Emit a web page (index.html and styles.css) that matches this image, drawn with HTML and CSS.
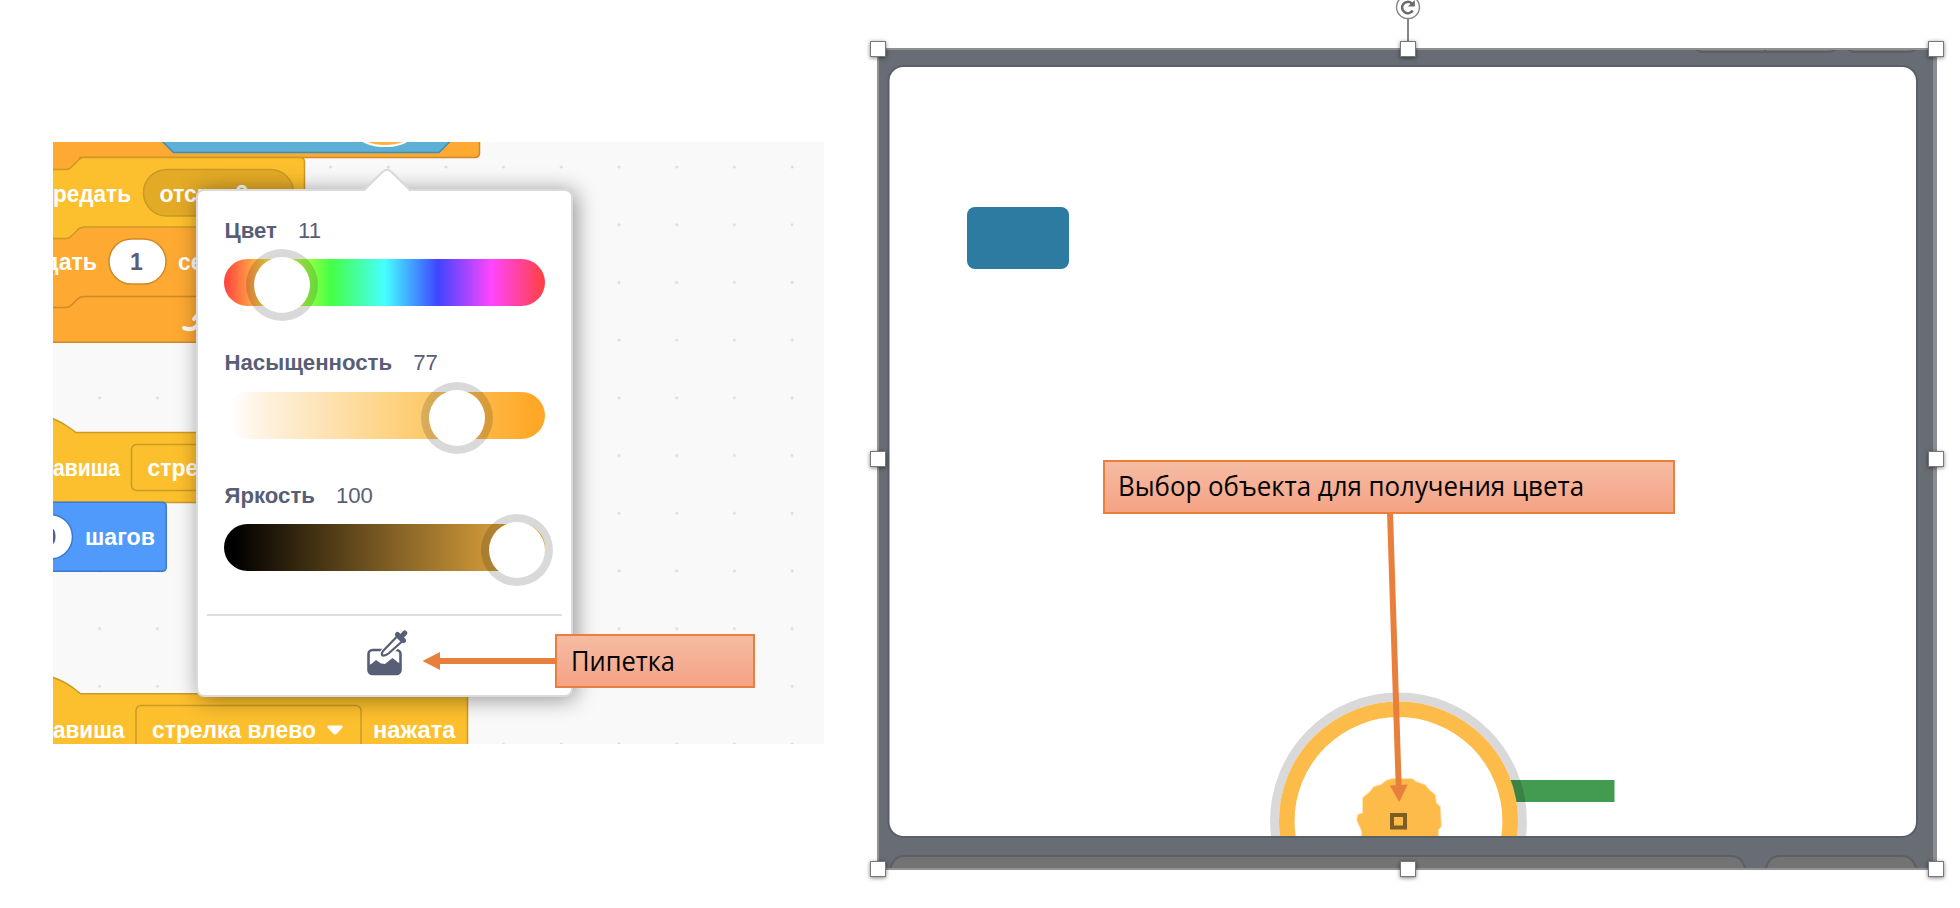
FILE: index.html
```html
<!DOCTYPE html>
<html lang="ru">
<head>
<meta charset="utf-8">
<title>Пипетка</title>
<link rel="stylesheet" href="styles.css">
</head>
<body>
<main class="slide">
  <section class="workspace">
    <svg class="blocks" width="771" height="602" viewBox="53 142 771 602">
      <defs>
        <pattern id="grid" x="70.85" y="138.15" width="57.7" height="57.7" patternUnits="userSpaceOnUse">
          <circle cx="28.85" cy="28.85" r="1.5" fill="#dcdcdc"/>
        </pattern>
      </defs>
      <rect x="53" y="142" width="771" height="602" fill="url(#grid)"/>

      <path class="orange" d="M40 130H479.500V153q0 4.500-4.500 4.500H80V342.300H40z"/>
      <path class="sensing" d="M151 130L173.500 152.500H439L461.500 130z"/>
      <ellipse class="swatch" cx="385" cy="134" rx="27" ry="12"/>

      <path class="orange" d="M40 215H230V342.300H40z"/>
      <path class="orange" d="M40 307.500H66q3 0 5-2l6-6q3-3 7-3H230V342.300H40z"/>
      <path class="yellow" d="M40 169.500H66q3 0 5-2l6-6q3-4 7-4H300q4.500 0 4.500 4.500V227H84q-4 0-7 3.500l-6 6q-2 2-5 2H40z"/>
      <rect class="pill-dark" x="143.500" y="169.500" width="150" height="46.500" rx="23.250"/>
      <text class="label" x="53" y="201.500" textLength="78" lengthAdjust="spacingAndGlyphs">редать</text>
      <text class="label" x="159.500" y="201.500">отскок</text>
      <text class="label" x="235.500" y="201.500">2</text>

      <text class="label" x="44" y="269.500" textLength="53" lengthAdjust="spacingAndGlyphs">дать</text>
      <rect class="input-orange" x="109" y="239" width="57" height="45" rx="22.500"/>
      <text class="value" x="136.500" y="269.500">1</text>
      <text class="label" x="178" y="269.500">сек</text>
      <path class="loop" d="M184 328q11 4 15-6v-8M194 319l6-7 7 7"/>

      <path class="yellow" d="M40 415q17 3 32 14.500l4 3H240V502.500H40z" />
      <text class="label" x="53" y="476" textLength="67" lengthAdjust="spacingAndGlyphs">авиша</text>
      <rect class="field" x="131.500" y="444.500" width="200" height="46" rx="5"/>
      <text class="label" x="147.500" y="476">стрелка</text>

      <path class="motion" d="M40 502.300H162q4.300 0 4.300 4.300V567q0 4.300-4.300 4.300H40z"/>
      <rect class="input-blue" x="12" y="514.500" width="60.500" height="44.500" rx="22.250"/>
      <text class="value" x="50" y="545">0</text>
      <text class="label" x="85" y="545" textLength="70" lengthAdjust="spacingAndGlyphs">шагов</text>

      <path class="yellow" d="M40 674q20 3.500 36 16l4.500 3.800H467.500V760H40z"/>
      <text class="label" x="53" y="737.500" textLength="71.500" lengthAdjust="spacingAndGlyphs">авиша</text>
      <rect class="field" x="136" y="705.500" width="225" height="60" rx="5"/>
      <text class="label" x="152" y="737.500" textLength="164" lengthAdjust="spacingAndGlyphs">стрелка влево</text>
      <path class="white" d="M329.500 725.500h11q3.500 0 1.500 2.500l-5 5.500q-2 2-4 0l-5-5.500q-2-2.500 1.500-2.500z"/>
      <text class="label" x="373" y="737.500" textLength="82.500" lengthAdjust="spacingAndGlyphs">нажата</text>
    </svg>
  </section>

  <section class="picker">
    <svg class="picker-tip" width="52" height="25" viewBox="0 0 52 25">
      <path class="tip-fill" d="M1 25L3 23 21.500 4.500q4.500-4.500 9 0L49 23l2 2z"/>
      <path class="tip-line" d="M2.500 22.500L21.500 4q4.500-4.500 9 0L49.500 22.500"/>
    </svg>
    <div class="control">
      <div class="caption"><b class="name">Цвет</b><span>11</span></div>
      <div class="bar hue"><i class="knob knob-hue"></i></div>
    </div>
    <div class="control">
      <div class="caption"><b class="name">Насыщенность</b><span>77</span></div>
      <div class="bar saturation"><i class="knob knob-saturation"></i></div>
    </div>
    <div class="control">
      <div class="caption"><b class="name">Яркость</b><span>100</span></div>
      <div class="bar brightness"><i class="knob knob-brightness"></i></div>
    </div>
    <div class="tools">
      <svg width="42" height="46" viewBox="0 0 42 46">
        <rect x="1.500" y="20" width="32" height="24" rx="4" fill="#fff" stroke="#575e75" stroke-width="2.600"/>
        <path fill="#575e75" d="M2 35l3-1.500 4-3.500 5 3.500 4 .5 7.500-6 5 4 3 2v7q0 3.500-3.500 3.500H5.500Q2 44.500 2 41z"/>
        <path d="M16 25.500q-1.500-1.500.5-4L30 7l5 4.500L21.500 23.500q-3 2.500-5.500 2z" fill="#fff" stroke="#fff" stroke-width="5.500"/>
        <path d="M15.500 25.500q-1.500-1.500.5-4.500L30 6.500l5 5L21.500 23.500q-3 2.500-6 2z" fill="#fff" stroke="#575e75" stroke-width="2.200" stroke-linejoin="round"/>
        <path d="M30.500 4.500l6 6M34 7l3.800-4" fill="none" stroke="#575e75" stroke-width="5" stroke-linecap="round"/>
      </svg>
    </div>
  </section>

  <section class="stage">
    <svg class="scene" width="1060" height="822" viewBox="877 48 1060 822">
      <defs><clipPath id="canvas"><rect x="889.500" y="67" width="1026.500" height="769" rx="14"/></clipPath></defs>
      <rect x="877" y="48" width="1060" height="822" fill="#686c75"/>
      <g fill="#737373" stroke="#5d5f65" stroke-width="2">
        <path d="M1695 48q3 4 8 4H1829q5 0 8-4zM1847 48q3 4 8 4H1909q5 0 8-4zM1765 48v4"/>
        <path d="M889.500 872q3-16 15-16H1731q12 0 15 16zM1765 872q3-16 15-16H1902q12 0 15 16z"/>
      </g>
      <rect x="888.500" y="66" width="1028.500" height="771" rx="15" fill="#fff" stroke="#5a5e67" stroke-width="2"/>
      <rect x="967" y="207" width="102" height="62" rx="8" fill="#2d7ba0"/>
      <g clip-path="url(#canvas)">
        <rect x="1500" y="780" width="114.500" height="22" fill="#439b50"/>
        <circle cx="1398.500" cy="821" r="112" fill="#fff"/>
        <circle cx="1398.500" cy="821" r="123.900" fill="none" stroke="#000" stroke-opacity=".15" stroke-width="9"/>
        <circle cx="1398.500" cy="821" r="111.700" fill="none" stroke="#fdbb4a" stroke-width="15.600"/>
        <path class="blob" d="M1386 781l6-2h20l4 3 9 3 4 5 6 5 1 8 4 4 1 19-3 4v10h-76v-9l-5-11 1-5 5-2v-15l7-6 4-5 7-2z"/>
        <rect x="1392" y="815" width="13" height="12.500" fill="none" stroke="#7d5d24" stroke-width="4"/>
      </g>
      <path d="M877 49H1937" stroke="#8f908f" stroke-width="2"/>
      <path d="M878 48V870M877 869H1937" stroke="#929294" stroke-width="2"/>
      <path d="M1935 50V868" stroke="#8c8d92" stroke-width="4"/>
    </svg>
    <svg class="rotate" width="30" height="44" viewBox="1393 0 30 44">
      <path d="M1408 18V42" stroke="#868686" stroke-width="2"/>
      <circle cx="1408" cy="7" r="11.500" fill="#fff" stroke="#858585" stroke-width="1.400"/>
      <path d="M1411.500 3.200a5.700 5.700 0 1 0 1.200 7.300" fill="none" stroke="#6a6a6a" stroke-width="2.500"/>
      <path d="M1414.800 0v6.500h-7z" fill="#6a6a6a"/>
    </svg>
    <i class="handle top left"></i><i class="handle top center"></i><i class="handle top right"></i>
    <i class="handle middle left"></i><i class="handle middle right"></i>
    <i class="handle bottom left"></i><i class="handle bottom center"></i><i class="handle bottom right"></i>
  </section>

  <svg class="arrows" width="1960" height="908" viewBox="0 0 1960 908">
    <path d="M556 661H438" stroke="#e97f3d" stroke-width="6"/>
    <path d="M422.500 661L440 652V670z" fill="#e97f3d"/>
    <path d="M1390 512L1398.700 787" stroke="#e97f3d" stroke-width="6"/>
    <path d="M1399.300 802L1389.700 785.500L1407.700 784.500z" fill="#e97f3d"/>
  </svg>
  <div class="callout callout-picker">
    <svg width="170" height="50"><text class="note" x="14" y="34.500" textLength="104" lengthAdjust="spacingAndGlyphs">Пипетка</text></svg>
  </div>
  <div class="callout callout-object">
    <svg width="540" height="50"><text class="note" x="13" y="34" textLength="466" lengthAdjust="spacingAndGlyphs">Выбор объекта для получения цвета</text></svg>
  </div>
</main>
</body>
</html>
```
FILE: styles.css
```css
* { box-sizing: border-box; }
body { margin: 0; background: #fff; font-family: "Liberation Sans", Arial, sans-serif; }
svg { display: block; }
.slide { position: relative; width: 1960px; height: 908px; overflow: hidden; background: #fff; }

/* Block workspace */
.workspace { position: absolute; left: 53px; top: 142px; width: 771px; height: 602px; background: #f9f9f9; overflow: hidden; }
.orange { fill: #fda932; stroke: #ce8a26; stroke-width: 1.5; }
.yellow { fill: #fcbf2d; stroke: #cb9a27; stroke-width: 1.5; }
.sensing { fill: #5fb0d6; stroke: #3d8eb6; stroke-width: 1.5; }
.motion { fill: #4f9afb; stroke: #3f79cc; stroke-width: 1.5; }
.swatch { fill: #fdb13f; stroke: #fff; stroke-width: 2; }
.pill-dark { fill: #e3aa26; stroke: #c99a26; stroke-width: 1.5; }
.field { fill: none; stroke: #cb9a27; stroke-width: 1.5; }
.input-orange { fill: #fff; stroke: #ce8a26; stroke-width: 1.5; }
.input-blue { fill: #fff; stroke: #3f79cc; stroke-width: 1.5; }
.white { fill: #fff; }
.loop { fill: none; stroke: #fff; stroke-width: 4; stroke-linecap: round; }
.label { fill: #fff; font-size: 23px; font-weight: 700; }
.value { fill: #575e75; font-size: 23px; font-weight: 700; text-anchor: middle; }

/* Colour picker */
.picker { position: absolute; left: 196px; top: 189px; width: 377px; height: 508px; padding: 25px 9px 0; display: flex; flex-direction: column; background: #fff; border: 2px solid #dadadb; border-radius: 8px; box-shadow: 3px 2px 22px rgba(0, 0, 0, .42); }
.picker-tip { position: absolute; left: 163px; top: -23px; }
.tip-fill { fill: #fff; }
.tip-line { fill: none; stroke: #d9d9d9; stroke-width: 2; }
.control { height: 132.5px; padding: 0 17px; }
.caption { display: flex; gap: 21px; height: 43px; padding: 1.5px 0 0 .5px; font-size: 22.2px; line-height: 26px; color: #575e75; }
.bar { position: relative; width: 321px; height: 47px; border-radius: 23.5px; }
.hue { background: linear-gradient(90deg, #ff4040 0%, #ffff45 16.67%, #45ff45 33.33%, #45ffff 50%, #4045ff 66.67%, #ff45ff 83.33%, #ff4040 100%); }
.saturation { background: linear-gradient(90deg, #fff 2%, #fef1de 13%, #fdd68c 48%, #fec764 66%, #fea827 96%); }
.brightness { background: linear-gradient(90deg, #000 3%, #815f25 52%, #cf9939 84%, #fea827); }
.knob { position: absolute; top: -10px; width: 72px; height: 72px; border: 8px solid rgba(0, 0, 0, .15); border-radius: 50%; background: #fff padding-box; }
.knob-hue { left: 22px; }
.knob-saturation { left: 197px; }
.knob-brightness { left: 257px; }
.tools { display: flex; justify-content: center; height: 75px; margin-top: .5px; padding: 14px 0 0 6px; border-top: 2px solid #dedede; }

/* Selected stage picture */
.stage { position: absolute; left: 0; top: 0; }
.scene { position: absolute; left: 877px; top: 48px; }
.blob { fill: #fdbb4a; stroke: #fdbb4a; stroke-opacity: .4; stroke-width: 2; }
.rotate { position: absolute; left: 1393px; top: 0; }
.handle { position: absolute; width: 16px; height: 16px; background: #fff; border: 1px solid #777; box-shadow: 0 1px 4px rgba(0, 0, 0, .5); }
.top { top: 41px; }
.middle { top: 451px; }
.bottom { top: 861px; }
.left { left: 870px; }
.center { left: 1400px; }
.right { left: 1928px; }

/* Notes */
.arrows { position: absolute; left: 0; top: 0; }
.callout { position: absolute; height: 54px; background: linear-gradient(#f6bba4, #f5a384); border: 2px solid #e97f3d; }
.callout-picker { left: 555px; top: 634px; width: 200px; }
.callout-object { left: 1103px; top: 460px; width: 572px; }
.note { font-family: "Open Sans", "Noto Sans", sans-serif; font-size: 27px; fill: #000; }
```
